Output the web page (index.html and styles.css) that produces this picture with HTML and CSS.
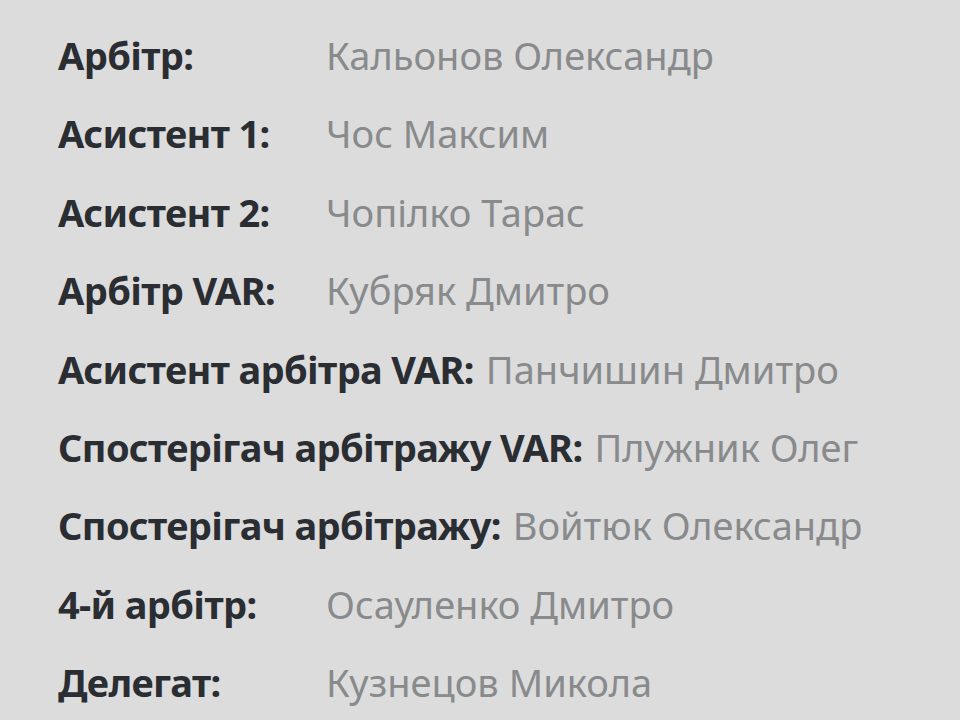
FILE: index.html
```html
<!DOCTYPE html>
<html lang="uk">
<head>
    <meta charset="UTF-8">
    <meta name="viewport" content="width=device-width, initial-scale=1.0">
    <title>Арбітри матчу</title>
    <link rel="stylesheet" href="styles.css">
</head>
<body>
    <div class="officials">
        <div class="row"><span class="role">Арбітр:</span><span class="name">Кальонов Олександр</span></div>
        <div class="row"><span class="role">Асистент 1:</span><span class="name">Чос Максим</span></div>
        <div class="row"><span class="role">Асистент 2:</span><span class="name">Чопілко Тарас</span></div>
        <div class="row"><span class="role">Арбітр VAR:</span><span class="name">Кубряк Дмитро</span></div>
        <div class="row"><span class="role">Асистент арбітра VAR:</span><span class="name">Панчишин Дмитро</span></div>
        <div class="row"><span class="role">Спостерігач арбітражу VAR:</span><span class="name">Плужник Олег</span></div>
        <div class="row"><span class="role">Спостерігач арбітражу:</span><span class="name">Войтюк Олександр</span></div>
        <div class="row"><span class="role">4-й арбітр:</span><span class="name">Осауленко Дмитро</span></div>
        <div class="row"><span class="role">Делегат:</span><span class="name">Кузнецов Микола</span></div>
    </div>
</body>
</html>
```

FILE: styles.css
```css
body {
    margin: 0;
    padding: 0;
    background: #dcdcdc;
    font-family: 'Noto Sans', 'Open Sans', Arial, sans-serif;
    height: 720px;
    overflow: hidden;
}

.officials {
    padding: 30px 0 0 58px;
    display: flex;
    flex-direction: column;
}

.row {
    display: flex;
    align-items: baseline;
    gap: 12px;
    height: 78.4px;
    font-size: 38px;
    line-height: 50px;
}

.role {
    min-width: 256px;
    font-weight: 700;
    letter-spacing: -0.65px;
    color: #2a2d32;
}

.name {
    color: #888a8c;
}
```
